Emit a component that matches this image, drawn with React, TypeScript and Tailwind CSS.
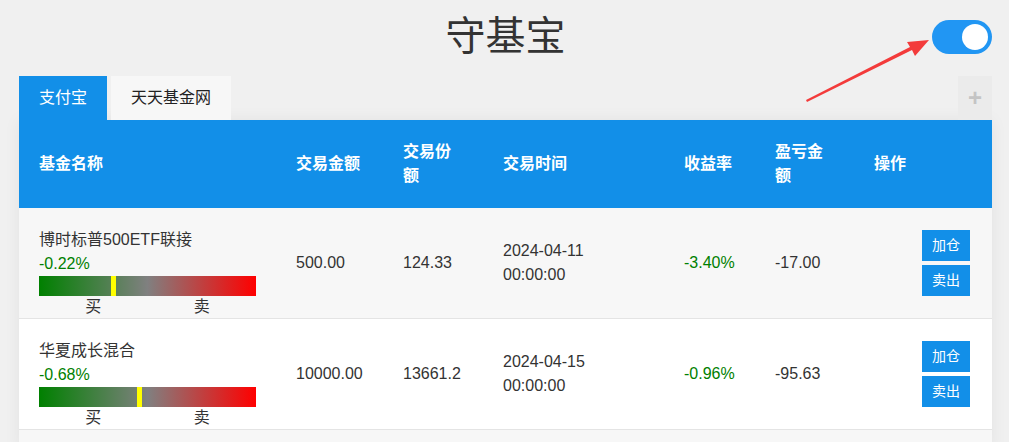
import React from "react"

const font = { fontFamily: '"Liberation Sans", Arial, "Noto Sans CJK SC", sans-serif' }

type Fund = {
  name: string
  change: string
  marker: number
  amount: string
  shares: string
  time: string
  rate: string
  profit: string
}

const funds: Fund[] = [
  {
    name: "博时标普500ETF联接",
    change: "-0.22%",
    marker: 33.2,
    amount: "500.00",
    shares: "124.33",
    time: "2024-04-11 00:00:00",
    rate: "-3.40%",
    profit: "-17.00",
  },
  {
    name: "华夏成长混合",
    change: "-0.68%",
    marker: 45.2,
    amount: "10000.00",
    shares: "13661.2",
    time: "2024-04-15 00:00:00",
    rate: "-0.96%",
    profit: "-95.63",
  },
]

const cols = "grid grid-cols-[257px_107px_100px_181px_91px_99px_138px]"

function Bar({ marker }: { marker: number }) {
  return (
    <div className="w-[217px]">
      <div className="relative h-5 bg-[linear-gradient(to_right,#008000,#808080,#ff0000)]">
        <div className="absolute top-0 h-5 w-[5px] bg-[#ffff00]" style={{ left: `${marker}%` }} />
      </div>
      <div className="flex text-[16px] leading-[22px] text-[#333]">
        <span className="flex-1 text-center">买</span>
        <span className="flex-1 text-center">卖</span>
      </div>
    </div>
  )
}

export default function App() {
  return (
    <div className="relative h-[442px] bg-[#f0f0f0] overflow-hidden" style={font}>
      <div className="ml-[19px] mr-[17px]">
        <div className="relative h-[76px] flex items-center justify-center">
          <h1 className="text-[40px] leading-none text-[#333] pb-[4px]">守基宝</h1>
          <div className="absolute right-0 top-5 w-[60px] h-[34px] rounded-full bg-[#2196f3] flex items-center justify-end pr-1">
            <div className="w-[26px] h-[26px] rounded-full bg-white" />
          </div>
        </div>

        <div className="flex items-end h-[44px]">
          <div className="h-full px-5 flex items-center bg-[#128fe8] text-white text-[16px]">支付宝</div>
          <div className="h-full ml-1 px-5 flex items-center bg-[#f7f7f7] text-[#222] text-[16px]">天天基金网</div>
          <div className="flex-1" />
          <div className="h-full w-[34px] flex items-center justify-center bg-[#ebebeb] text-[#c4c4c4] text-[24px] font-bold">+</div>
        </div>

        <div className="shadow-[0_0_16px_rgba(0,0,0,0.06)]">
          <div className={`${cols} h-[88px] bg-[#128fe8] text-white font-bold text-[16px] leading-[24px] items-center`}>
            <div className="px-5">基金名称</div>
            <div className="px-5">交易金额</div>
            <div className="px-5">交易份额</div>
            <div className="px-5">交易时间</div>
            <div className="px-5">收益率</div>
            <div className="px-5">盈亏金额</div>
            <div className="px-5">操作</div>
          </div>

          {funds.map((f, i) => (
            <div
              key={f.name}
              className={`${cols} items-center border-b border-[#e4e4e4] text-[16px] text-[#333] ${i % 2 === 0 ? "bg-[#f7f7f7]" : "bg-white"}`}
            >
              <div className="px-5 pt-5 h-[110px]">
                <div className="leading-[24px]">{f.name}</div>
                <div className="leading-[24px] text-[#008000]">{f.change}</div>
                <Bar marker={f.marker} />
              </div>
              <div className="px-5">{f.amount}</div>
              <div className="px-5">{f.shares}</div>
              <div className="px-5 leading-[24px]">{f.time}</div>
              <div className="px-5 text-[#008000]">{f.rate}</div>
              <div className="px-5">{f.profit}</div>
              <div className="pr-[22px] flex flex-col items-end gap-1">
                <button className="w-12 h-[31px] bg-[#128fe8] text-white text-[14px]">加仓</button>
                <button className="w-12 h-[31px] bg-[#128fe8] text-white text-[14px]">卖出</button>
              </div>
            </div>
          ))}
          <div className="h-[20px] bg-[#f7f7f7]" />
        </div>
      </div>

      <svg className="absolute left-0 top-0 pointer-events-none" width="1009" height="442">
        <polygon points="806,100 807,102 912,50 915,56 929,40 907,42 910,47" fill="#f33b3b" />
      </svg>
    </div>
  )
}
